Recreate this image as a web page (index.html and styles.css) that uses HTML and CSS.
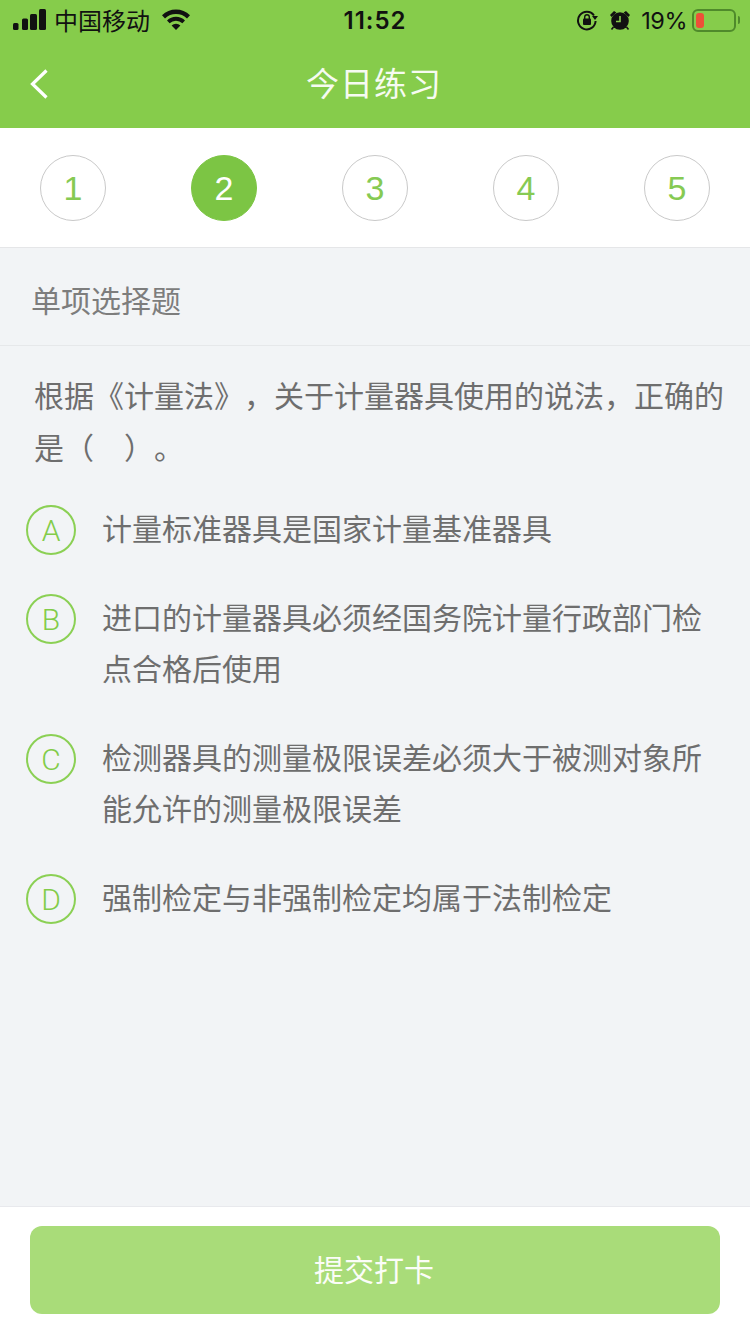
FILE: index.html
```html
<!DOCTYPE html>
<html lang="zh-CN">
<head>
<meta charset="utf-8">
<title>今日练习</title>
<link rel="stylesheet" href="styles.css">
</head>
<body>
<div class="page">
  <header class="top">
    <div class="status">
      <div class="status-side">
        <svg class="signal" width="33" height="22" viewBox="0 0 33 22"><rect x="0" y="14" width="5.500" height="7" rx="1.500"/><rect x="9" y="9.500" width="6" height="11.500" rx="1.500"/><rect x="17" y="5" width="7" height="16" rx="1.500"/><rect x="26" y="0" width="7" height="21" rx="1.500"/></svg>
        <span class="carrier">中国移动</span>
        <svg class="wifi" width="30" height="22" viewBox="0 0 30 22"><path d="M15 21l-4.400-4.600a6.400 6.400 0 0 1 8.800 0z"/><path d="M8.600 14.200l-2.600-2.800a13.200 13.200 0 0 1 18 0l-2.600 2.800a9.400 9.400 0 0 0-12.800 0z"/><path d="M4 9.400L1 6.200a20 20 0 0 1 28 0l-3 3.200a15.800 15.800 0 0 0-22 0z"/></svg>
      </div>
      <span class="time">11:52</span>
      <div class="status-side right">
        <svg class="lock" width="22" height="22" viewBox="0 0 22 22"><path d="M18 6.500A8.800 8.800 0 1 0 19.600 12" fill="none" stroke="#111" stroke-width="2"/><path d="M16 7h6l-3 4z"/><rect x="7" y="9.500" width="8" height="6.500" rx="1"/><path d="M8.700 10V8a2.300 2.300 0 0 1 4.600 0v2" fill="none" stroke="#111" stroke-width="1.400"/></svg>
        <svg class="alarm" width="22" height="22" viewBox="0 0 22 22"><circle cx="11" cy="12" r="8.800"/><path d="M1 6l4-4 2.400 1.600L2.600 8zM21 6l-4-4-2.400 1.600L19.400 8z"/><path d="M4.500 18l-2 2.500M17.500 18l2 2.500" stroke="#111" stroke-width="1.600"/><path d="M11 7v5.500H7" fill="none" stroke="#86cc4b" stroke-width="1.600"/></svg>
        <span class="percent">19%</span>
        <div class="battery"><div class="battery-fill"></div></div>
        <div class="battery-cap"></div>
      </div>
    </div>
    <nav class="nav">
      <svg class="back" width="22" height="32" viewBox="0 0 22 32"><path d="M18.500 2.500L4.500 16l14 13.500" fill="none" stroke="#fff" stroke-width="3.200"/></svg>
      <h1 class="title">今日练习</h1>
    </nav>
  </header>

  <section class="steps">
    <div class="step">1</div>
    <div class="step active">2</div>
    <div class="step">3</div>
    <div class="step">4</div>
    <div class="step">5</div>
  </section>

  <main class="content">
    <div class="kind">单项选择题</div>
    <p class="question">根据《计量法》，关于计量器具使用的说法，正确的是（　）。</p>
    <ul class="options">
      <li class="option"><span class="letter">A</span><span class="option-text">计量标准器具是国家计量基准器具</span></li>
      <li class="option"><span class="letter">B</span><span class="option-text">进口的计量器具必须经国务院计量行政部门检点合格后使用</span></li>
      <li class="option"><span class="letter">C</span><span class="option-text">检测器具的测量极限误差必须大于被测对象所能允许的测量极限误差</span></li>
      <li class="option"><span class="letter">D</span><span class="option-text">强制检定与非强制检定均属于法制检定</span></li>
    </ul>
  </main>

  <footer class="footer">
    <button class="submit" type="button">提交打卡</button>
  </footer>
</div>
</body>
</html>
```

FILE: styles.css
```css
* {
  box-sizing: border-box;
}

html,
body {
  margin: 0;
  padding: 0;
}

body {
  font-family: "Noto Sans CJK SC", "Noto Sans", sans-serif;
  font-kerning: none;
  text-spacing-trim: space-all;
  background: #f2f4f6;
}

.page {
  width: 750px;
  height: 1334px;
  display: flex;
  flex-direction: column;
  overflow: hidden;
}

.top {
  height: 128px;
  background: #86cc4b;
  flex: none;
}

.status {
  height: 40px;
  display: flex;
  align-items: center;
  justify-content: space-between;
  padding: 0 10px 0 13px;
  color: #111;
}

.status-side {
  display: flex;
  align-items: center;
  width: 240px;
}

.status-side.right {
  justify-content: flex-end;
}

.signal,
.wifi,
.lock,
.alarm {
  fill: #111;
  flex: none;
}

.signal {
  margin-right: 8px;
}

.carrier {
  font-size: 24px;
  line-height: 40px;
  margin-right: 11px;
}

.time {
  font-family: Inter, Roboto, sans-serif;
  font-size: 24px;
  font-weight: 600;
  letter-spacing: 1px;
  margin-left: -3px;
}

.lock {
  margin-right: 11px;
}

.alarm {
  margin-right: 10px;
}

.percent {
  font-family: Inter, Roboto, sans-serif;
  font-size: 23.500px;
  letter-spacing: -0.500px;
  margin-right: 5px;
}

.battery {
  width: 44px;
  height: 23px;
  border: 2px solid #4f8a2b;
  border-radius: 6px;
  padding: 2px;
}

.battery-fill {
  width: 8px;
  height: 100%;
  background: #ee4f38;
  border-radius: 3px;
}

.battery-cap {
  width: 2px;
  height: 8px;
  margin-left: 2px;
  background: #4f8a2b;
  border-radius: 0 2px 2px 0;
}

.nav {
  height: 88px;
  display: flex;
  align-items: flex-start;
  justify-content: center;
  position: relative;
}

.back {
  position: absolute;
  left: 28px;
  top: 28px;
}

.title {
  margin: 0 2px 0 0;
  font-size: 33px;
  font-weight: 400;
  line-height: 84px;
  letter-spacing: 1px;
  color: #f6fbf1;
}

.steps {
  height: 120px;
  flex: none;
  background: #fff;
  border-bottom: 1px solid #e5e6e8;
  display: flex;
  justify-content: space-between;
  padding: 27px 40px 0;
}

.step {
  width: 66px;
  height: 66px;
  border: 1px solid #c9c9c9;
  border-radius: 50%;
  display: flex;
  align-items: center;
  justify-content: center;
  font-family: "Liberation Sans", sans-serif;
  font-size: 34px;
  color: #86ca53;
}

.step.active {
  background: #7cc544;
  border-color: #7cc544;
  color: #fff;
}

.content {
  flex: 1;
  min-height: 0;
}

.kind {
  height: 98px;
  border-bottom: 1px solid #e6e8ea;
  padding: 0 30px 0 31px;
  font-size: 30px;
  line-height: 102px;
  color: #7d7d7d;
}

.question {
  margin: 0;
  padding: 22px 20px 0 34px;
  font-size: 30px;
  line-height: 52px;
  color: #6e6e6e;
}

.options {
  list-style: none;
  margin: 0;
  padding: 33px 20px 0 26px;
}

.option {
  display: flex;
  align-items: flex-start;
  margin-bottom: 38px;
}

.letter {
  width: 50px;
  height: 50px;
  flex: none;
  border: 2px solid #8bd054;
  border-radius: 50%;
  display: flex;
  align-items: center;
  justify-content: center;
  font-family: Roboto, sans-serif;
  font-weight: 300;
  font-size: 30px;
  color: #82cc49;
  margin-right: 26px;
}

.option-text {
  font-size: 30px;
  line-height: 51px;
  color: #6e6e6e;
  margin: -3px 0 3px;
}

.footer {
  height: 128px;
  flex: none;
  background: #fff;
  border-top: 1px solid #e8e9ed;
  padding: 19px 30px 0;
}

.submit {
  display: block;
  width: 690px;
  height: 88px;
  border: 0;
  border-radius: 12px;
  background: #a9dc79;
  color: #fbfdf8;
  font-family: inherit;
  font-size: 30px;
  padding: 0 2px 4px 0;
}
```
